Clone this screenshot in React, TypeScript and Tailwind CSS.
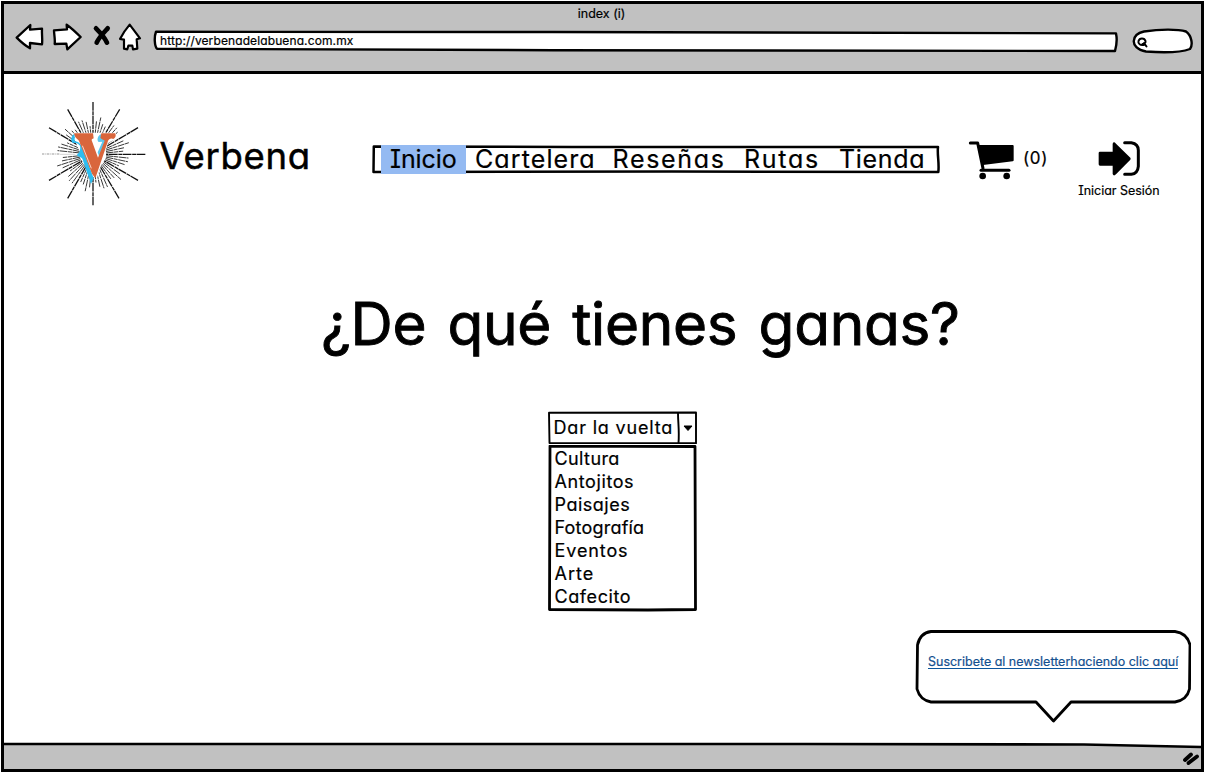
import type { ReactNode } from "react";

const INK = "#000";
const CX = 165;
const CY = 178;

const longRays = [
  [165, 21], [245, 43], [300, 98], [322, 178], [300, 256], [243, 310],
  [165, 331], [89, 310], [33, 256], [33, 98], [89, 43],
];

const shortRayLengths = [94, 110, 88, 104, 98];

const shortRays = Array.from({ length: 60 }, (_, i) => i)
  .filter((i) => i % 5 !== 0)
  .map((i) => {
    const angle = (i * 6 * Math.PI) / 180;
    const outer = shortRayLengths[(i * 3) % 5] + (i % 2 ? 3 : -3);
    return {
      x1: CX + Math.cos(angle) * 40,
      y1: CY + Math.sin(angle) * 40,
      x2: CX + Math.cos(angle) * outer,
      y2: CY + Math.sin(angle) * outer,
    };
  });

function Logo() {
  return (
    <svg viewBox="0 0 336 348" className="h-[116px] w-[112px] shrink-0" fill="none">
      <g stroke="#2a2a2a" strokeWidth="2.8" strokeDasharray="22 1.5 12 2">
        {shortRays.map((r, i) => (
          <line key={i} {...r} />
        ))}
      </g>
      <g stroke="#111" strokeWidth="3.8" strokeDasharray="26 1.5 12 2">
        {longRays.map(([x, y], i) => (
          <line key={i} x1={x} y1={y} x2={CX + (x - CX) * 0.25} y2={CY + (y - CY) * 0.25} />
        ))}
      </g>
      <path d="M12 177H66" stroke="#999" strokeWidth="3.5" strokeDasharray="7 3 3 2" />
      <path d="M66 178H112" stroke="#bbb" strokeWidth="2" />
      <path d="M106 113H234V132L210 144L178 246H160L116 150Z" fill="#fff" />
      <path
        d="M110 116C99 121 97 136 104 144C112 142 121 146 126 152C128 163 126 172 116 180C122 186 130 186 133 191L159 267L167 250L138 172C134 152 124 140 110 138Z"
        fill="#2dbdf0"
      />
      <path d="M190 117C178 122 176 136 182 141L193 140L179 172L184 186L205 134Z" fill="#5cc8ee" />
      <path
        d="M108 115H165L167 130C163 132 161 132 161 136L180 188L200 137C197 133 190 133 187 128L190 115H232C235 122 232 130 226 132C220 128 212 132 210 138L172 250L162 236L124 140C120 130 112 134 108 115Z"
        fill="#d9663c"
      />
      <path d="M133 152L160 220" stroke="#fff" strokeWidth="2.2" />
    </svg>
  );
}

function ToolIcon({ x, width, className, children }: { x: number; width: number; className: string; children: ReactNode }) {
  return (
    <svg viewBox={`${x} 0 ${width} 135`} className={`h-[45px] shrink-0 ${className}`} fill="#fff" stroke={INK} strokeWidth="7" strokeLinejoin="round" strokeLinecap="round">
      {children}
    </svg>
  );
}

function Toolbar() {
  return (
    <div className="h-[70px] shrink-0 border-b-[3px] border-black bg-[#c1c1c1]">
      <div className="flex h-[11px] items-start justify-center pt-px pr-[2px]">
        <span className="text-[12.5px] leading-[18px]">index (i)</span>
      </div>
      <div className="flex pl-[6px]">
        <ToolIcon x={0} width={111} className="w-[37px]">
          <path d="M20 68L61 30L60 44L96 41C95 58 98 76 96 88L60 84V100C46 92 32 80 20 68Z" />
        </ToolIcon>
        <ToolIcon x={111} width={120} className="w-[40px]">
          <path d="M132 46L171 43L170 29C186 40 200 54 212 66L172 103L169 86L134 87C136 74 132 58 132 46Z" />
        </ToolIcon>
        <ToolIcon x={231} width={78} className="w-[26px]">
          <path d="M258 40C268 50 284 68 291 83M293 40C284 50 266 68 260 83" strokeWidth="14" fill="none" />
        </ToolIcon>
        <ToolIcon x={309} width={111} className="w-[37px]">
          <path d="M359 29L390 70L380 73L382 101L369 103L367 92H355L352 103L342 101V74L330 72C338 56 348 42 359 29Z" strokeWidth="6.5" />
        </ToolIcon>
        <div className="relative mt-[15px] ml-[3px] h-[23px] w-[965px]">
          <svg viewBox="0 0 965 23" className="absolute inset-0 h-full w-full" fill="#fff" stroke={INK} strokeWidth="2.4" strokeLinejoin="round">
            <path d="M3 1.800L400 2L963 3.400C964 8 964 14 962 21L400 20.200L4 18.800C1.500 16 1 7 3 1.800Z" />
          </svg>
          <span className="relative block pl-[7px] text-[12px] leading-[22px] tracking-[0.11px]">http://verbenadelabuena.com.mx</span>
        </div>
        <svg viewBox="0 0 62 28" className="mt-[12px] ml-[14px] h-[28px] w-[62px]" fill="#fff" stroke={INK} strokeWidth="2.4" strokeLinecap="round">
          <path d="M12 4.500C28 2 46 2 54 4.500C60 9 61 18 58 22C50 25 34 26 14 24.500C5 23 1.500 18 1.800 14C2 10 5 6 12 4.500Z" />
          <path d="M13 17.500C8 19 5.800 16.500 6.500 14C7.500 10.500 12.500 10.500 13.500 14C14 16 12 17 10.500 17M12 16L14.500 19.500" strokeWidth="2" fill="none" />
        </svg>
      </div>
    </div>
  );
}

const navItems = [
  { label: "Inicio", cell: "w-[85px] bg-[#94baf2] pl-[9px] tracking-[-0.1px]" },
  { label: "Cartelera", cell: "w-[137px] pl-[9px] tracking-[1.1px]" },
  { label: "Reseñas", cell: "w-[132px] pl-[9.500px] tracking-[1.7px]" },
  { label: "Rutas", cell: "w-[95px] pl-[9px] tracking-[1.7px]" },
  { label: "Tienda", cell: "w-[104px] pl-[9px] tracking-[0.7px]" },
];

function Nav() {
  return (
    <nav className="relative mt-[50px] ml-[62px] h-[29px] w-[568px] shrink-0">
      <svg viewBox="0 0 568 29" className="absolute inset-0 h-full w-full" fill="#fff" stroke={INK} strokeWidth="2.5" strokeLinejoin="round">
        <path d="M1.800 1.500L200 2L566 2C565 10 567.500 18 566.300 27L300 26.500L1.500 27Z" />
      </svg>
      <ul className="relative flex pl-[9px]">
        {navItems.map((item) => (
          <li key={item.label} className={`h-[29px] text-[25px] leading-[28px] whitespace-nowrap ${item.cell}`}>
            {item.label}
          </li>
        ))}
      </ul>
    </nav>
  );
}

function Header() {
  return (
    <header className="flex items-start pt-[21px] pl-[34px]">
      <Logo />
      <div className="mt-[39px] ml-[9.5px] w-[150.5px] text-[36.5px] leading-[44px] tracking-[0.7px] [-webkit-text-stroke:0.5px_black]">Verbena</div>
      <Nav />
      <div className="mt-[44px] ml-[27px] flex items-start">
        <svg viewBox="36 42 150 126" className="h-[42px] w-[50px]" fill={INK}>
          <path d="M46 54H68L84 130" stroke={INK} strokeWidth="9" fill="none" strokeLinecap="round" strokeLinejoin="round" />
          <path d="M66 60H173Q176 60 176 63V106Q176 109 173 109L84 120Z" />
          <path d="M78 136H162" stroke={INK} strokeWidth="9" strokeLinecap="round" />
          <circle cx="83" cy="153" r="10" />
          <circle cx="155" cy="153" r="10" />
        </svg>
        <span className="mt-[8px] ml-[6px] text-[17px] leading-[22px] tracking-[0.6px]">(0)</span>
      </div>
      <div className="mt-[45px] ml-[29px] flex w-[84px] flex-col items-center">
        <svg viewBox="425 45 132 114" className="h-[38px] w-[44px]">
          <path d="M434 80H472V56Q475 48 482 56L525 98Q527 101 525 104L482 148Q475 155 472 147V122H434Q430 122 430 118V84Q430 80 434 80Z" fill={INK} />
          <path d="M508 53H528Q549 56 549 76V124Q547 146 528 148H508" fill="none" stroke={INK} strokeWidth="9" strokeLinecap="round" />
        </svg>
        <span className="mt-[3px] text-[12.5px] leading-[20px] tracking-[-0.02px] whitespace-nowrap">Iniciar Sesión</span>
      </div>
    </header>
  );
}

const options = [
  { label: "Cultura", tracking: "tracking-[0.4px]" },
  { label: "Antojitos", tracking: "tracking-[0.6px]" },
  { label: "Paisajes", tracking: "tracking-[0.5px]" },
  { label: "Fotografía", tracking: "tracking-[0.2px]" },
  { label: "Eventos", tracking: "tracking-[0.9px]" },
  { label: "Arte", tracking: "tracking-[1px]" },
  { label: "Cafecito", tracking: "tracking-[0.6px]" },
];

function Dropdown() {
  return (
    <div className="mt-[51px] ml-[544px] w-[149px]">
      <div className="relative h-[33px]">
        <svg viewBox="0 0 149 33" className="absolute inset-0 h-full w-full" fill="#fff" stroke={INK} strokeWidth="1.9" strokeLinejoin="round">
          <path d="M1 1.800L148 1.500V32.300L1.500 32Z" />
          <path d="M130 2C130 12 131.500 20 130.500 32" />
          <path d="M136 15H144L140 19.500Z" fill={INK} strokeWidth="1" />
        </svg>
        <span className="relative block pl-[5.5px] text-[18px] leading-[33px] tracking-[0.82px] whitespace-nowrap">Dar la vuelta</span>
      </div>
      <ul className="relative mt-px h-[167px] pt-[2px]">
        <svg viewBox="0 0 149 167" className="absolute inset-0 h-full w-full" fill="#fff" stroke={INK} strokeWidth="2.8" strokeLinejoin="round">
          <path d="M2 1L147 1.500L147.500 164.500L100 165L1.500 164.500Z" />
        </svg>
        {options.map((o) => (
          <li key={o.label} className={`relative h-[23px] pl-[6.5px] text-[18px] leading-[23px] ${o.tracking}`}>
            {o.label}
          </li>
        ))}
      </ul>
    </div>
  );
}

function Callout() {
  return (
    <div className="relative mt-[17px] ml-[911px] h-[94px] w-[276px] pt-[22px] pl-[13px]">
      <svg viewBox="0 0 276 94" className="absolute inset-0 h-full w-full" fill="#fff" stroke={INK} strokeWidth="2.8" strokeLinejoin="round">
        <path d="M16 2.500H260Q272 4 275 16L274.500 60Q272 71 260 73H156L138.500 92L121 73H16Q5 71 2 60L2.500 16Q5 4 16 2.500Z" />
      </svg>
      <a className="relative block h-[18px] w-[250px] border-b border-[#0a559c] text-[12.5px] leading-[22px] tracking-[-0.01px] whitespace-nowrap text-[#14508f]">
        Suscribete al newsletterhaciendo clic aquí
      </a>
    </div>
  );
}

function StatusBar() {
  return (
    <svg viewBox="0 0 1197 28" className="h-[28px] w-full shrink-0">
      <path d="M0 3L800 3L1080 3.500L1197 6V28H0Z" fill="#c1c1c1" />
      <path d="M0 3L800 3L1080 3.500L1197 6" fill="none" stroke={INK} strokeWidth="2.6" />
      <path d="M1181 19L1187 13.500M1184.500 22L1193 15.500" fill="none" stroke={INK} strokeWidth="3.800" strokeLinecap="round" />
    </svg>
  );
}

export default function App() {
  return (
    <div className="h-[772px] w-[1205px] bg-white pt-px pl-px font-['Inter','Open_Sans',sans-serif] text-black [-webkit-text-stroke:0.2px] [font-feature-settings:'cv11','cv08']">
      <div className="flex h-[771px] w-[1203px] flex-col overflow-hidden border-[3px] border-black bg-white">
        <Toolbar />
        <main className="min-h-0 flex-1">
          <Header />
          <h1 className="mt-[77px] ml-[317px] text-[58.5px] leading-[72px] tracking-[-0.3px] whitespace-nowrap [word-spacing:5px] [-webkit-text-stroke:0.9px_black]">¿De qué tienes ganas?</h1>
          <Dropdown />
          <Callout />
        </main>
        <StatusBar />
      </div>
    </div>
  );
}
